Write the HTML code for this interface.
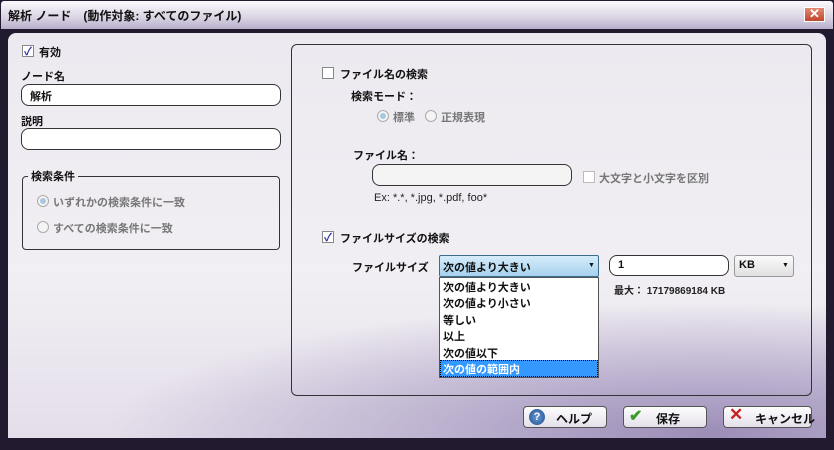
<!DOCTYPE html>
<html><head><meta charset="utf-8"><style>
*{box-sizing:border-box;margin:0;padding:0}
body{width:834px;height:450px;overflow:hidden;background:#221b30;font-family:"Liberation Sans","Noto Sans CJK JP",sans-serif;font-size:11px;color:#111;position:relative}
.a{position:absolute;white-space:nowrap}
#title{left:1px;top:1px;width:832px;height:28px;background:linear-gradient(#fbfafd,#d9d3e3 60%,#b7aecb);border-radius:3px 3px 0 0}
#body{left:8px;top:33px;width:818px;height:405px;border-radius:8px 8px 0 0;overflow:hidden;
background:radial-gradient(ellipse 600px 130px at 700px 400px,#9c8db7 0%,#b9aecd 40%,rgba(236,233,240,0) 100%),linear-gradient(#ece9f0,#f1eff3 60%,#e4deea)}
.b{font-weight:bold}
.inp{position:absolute;background:#fff;border:1px solid #333;border-radius:8px;height:22px}
.cb{position:absolute;width:12px;height:12px;border:1px solid #888;background:#fff}
.cb.on::after{content:"✓";position:absolute;left:1px;top:-3px;font-size:11px;color:#2a2ab0;font-weight:bold}
.rd{position:absolute;width:12px;height:12px;border:1px solid #aaa;border-radius:50%;background:#f4f4f4}
.rd.on::after{content:"";position:absolute;left:2px;top:2px;width:6px;height:6px;border-radius:50%;background:#a8c8e0}
.g{color:#777}
.btn{position:absolute;top:406px;height:22px;border:1px solid #555;border-radius:4px;background:linear-gradient(#fdfdfd,#e4e0ea);font-size:12px}
</style></head><body>
<div class="a" id="title"></div>
<div class="a b" style="left:8px;top:7px;font-size:12px">解析 ノード　(動作対象: すべてのファイル)</div>
<div class="a" style="left:804px;top:7px;width:21px;height:15px;background:linear-gradient(#e08a72,#c0472e);border:1px solid #fff;color:#fff;text-align:center;font-size:13px;line-height:12px;font-weight:bold">✕</div>
<div class="a" id="body"></div>

<div class="cb on" style="left:22px;top:45px"></div><div class="a b" style="left:39px;top:44px">有効</div>
<div class="a b" style="left:21px;top:68px">ノード名</div>
<div class="inp" style="left:21px;top:84px;width:260px"></div><div class="a b" style="left:30px;top:88px">解析</div>
<div class="a b" style="left:21px;top:113px">説明</div>
<div class="inp" style="left:21px;top:128px;width:260px"></div>
<div class="a" style="left:22px;top:176px;width:258px;height:74px;border:1px solid #333;border-radius:4px"></div>
<div class="a b" style="left:28px;top:168px;background:#efecf2;padding:0 3px">検索条件</div>
<div class="rd on" style="left:37px;top:195px"></div><div class="a b g" style="left:53px;top:194px">いずれかの検索条件に一致</div>
<div class="rd" style="left:37px;top:221px"></div><div class="a b g" style="left:53px;top:220px">すべての検索条件に一致</div>

<div class="a" style="left:291px;top:44px;width:521px;height:352px;border:1px solid #333;border-radius:6px"></div>
<div class="cb" style="left:322px;top:67px"></div><div class="a b" style="left:340px;top:66px">ファイル名の検索</div>
<div class="a b" style="left:351px;top:88px">検索モード：</div>
<div class="rd on" style="left:377px;top:110px"></div><div class="a b g" style="left:393px;top:109px">標準</div>
<div class="rd" style="left:425px;top:110px"></div><div class="a b g" style="left:441px;top:109px">正規表現</div>
<div class="a b" style="left:353px;top:147px">ファイル名：</div>
<div class="inp" style="left:372px;top:164px;width:200px;background:#f4f4f4"></div>
<div class="cb" style="left:583px;top:171px;border-color:#bbb"></div><div class="a b g" style="left:599px;top:170px">大文字と小文字を区別</div>
<div class="a" style="left:374px;top:192px;color:#222">Ex: *.*, *.jpg, *.pdf, foo*</div>
<div class="cb on" style="left:322px;top:231px"></div><div class="a b" style="left:340px;top:230px">ファイルサイズの検索</div>
<div class="a b" style="left:352px;top:259px">ファイルサイズ</div>
<div class="a" style="left:439px;top:255px;width:160px;height:22px;border:1px solid #3c6d8f;border-radius:2px;background:linear-gradient(#d6ecfa,#a6d2ee)"></div>
<div class="a b" style="left:443px;top:259px">次の値より大きい</div>
<div class="a" style="left:588px;top:262px;font-size:7px">▼</div>
<div class="inp" style="left:609px;top:255px;width:120px;height:21px"></div><div class="a b" style="left:618px;top:259px">1</div>
<div class="a" style="left:734px;top:255px;width:60px;height:22px;border:1px solid #999;border-radius:3px;background:linear-gradient(#fafafa,#e0e0e0)"></div>
<div class="a b" style="left:739px;top:259px">KB</div><div class="a" style="left:782px;top:262px;font-size:7px">▼</div>
<div class="a b" style="left:614px;top:282px;font-size:10px;color:#222">最大： 17179869184 KB</div>
<div class="a" style="left:439px;top:277px;width:160px;height:101px;border:1px solid #555;background:#fff"></div>
<div class="a b" style="left:443px;top:279px">次の値より大きい</div>
<div class="a b" style="left:443px;top:295px">次の値より小さい</div>
<div class="a b" style="left:443px;top:312px">等しい</div>
<div class="a b" style="left:443px;top:328px">以上</div>
<div class="a b" style="left:443px;top:345px">次の値以下</div>
<div class="a" style="left:440px;top:360px;width:158px;height:17px;background:#3399ff;border:1px dotted #000"></div>
<div class="a b" style="left:443px;top:361px;color:#fff">次の値の範囲内</div>

<div class="btn" style="left:523px;width:84px"></div>
<div class="a" style="left:529px;top:409px;width:16px;height:16px;border-radius:50%;background:radial-gradient(#6a9ad0,#1d4f93);color:#fff;font-weight:bold;text-align:center;line-height:16px;font-size:11px">?</div>
<div class="a b" style="left:556px;top:410px;font-size:12px">ヘルプ</div>
<div class="btn" style="left:623px;width:84px"></div>
<div class="a b" style="left:629px;top:406px;font-size:16px;color:#3a9a2a">✔</div>
<div class="a b" style="left:656px;top:410px;font-size:12px">保存</div>
<div class="btn" style="left:723px;width:89px"></div>
<div class="a b" style="left:729px;top:405px;font-size:17px;color:#c82020">✕</div>
<div class="a b" style="left:755px;top:410px;font-size:12px">キャンセル</div>
</body></html>
